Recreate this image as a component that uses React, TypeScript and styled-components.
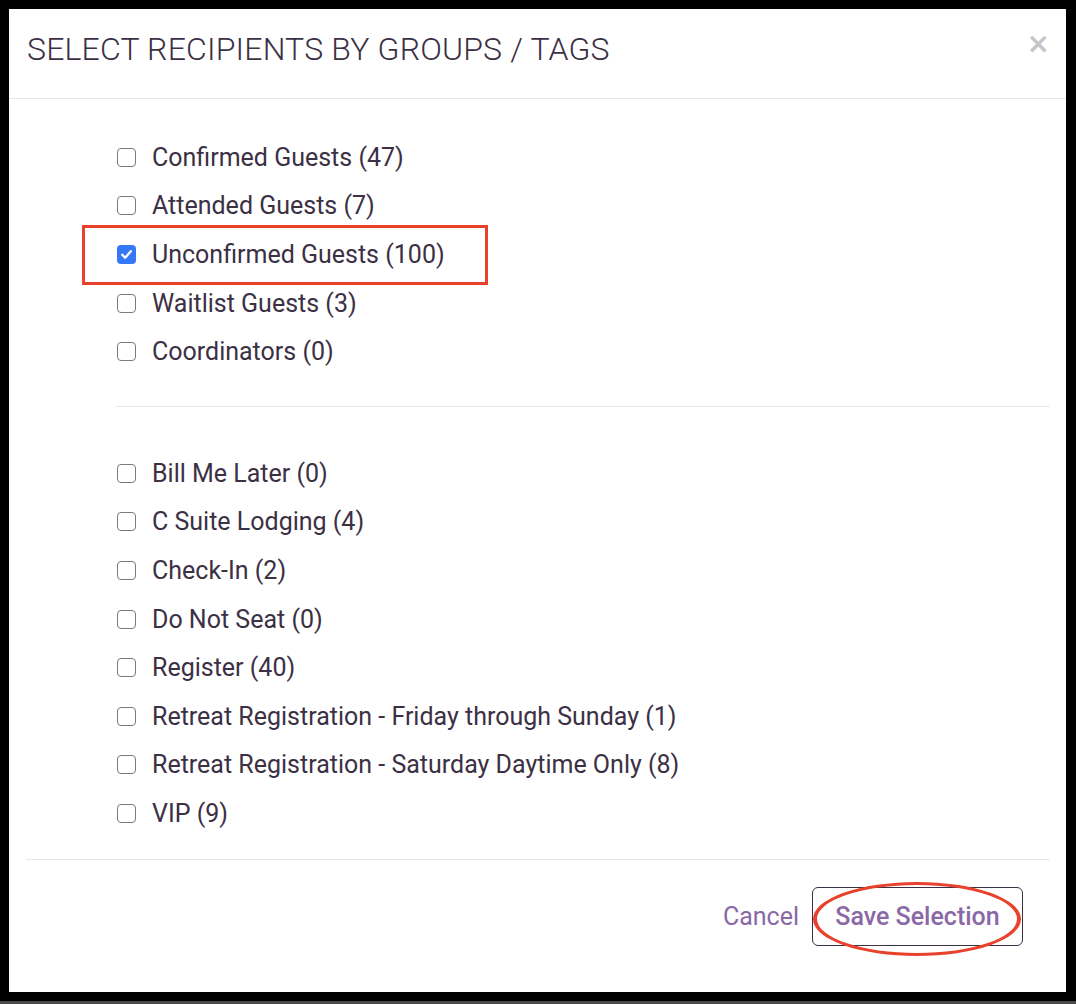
import React from "react";
import styled, { createGlobalStyle } from "styled-components";

const Global = createGlobalStyle`
  html, body { margin: 0; padding: 0; background: #000; }
  body { font-family: Roboto, "Liberation Sans", sans-serif; }
`;

const Frame = styled.div`
  width: 1076px;
  height: 1004px;
  display: flex;
  flex-direction: column;
  box-sizing: border-box;
  background: #000;
`;

const Modal = styled.div`
  margin: 9px 10px 0 9px;
  height: 983px;
  background: #fff;
  display: flex;
  flex-direction: column;
  position: relative;
`;

const Spacer = styled.div`
  flex: 1;
`;

const BottomStrip = styled.div`
  height: 3px;
  background: #4a4a4a;
`;

const Header = styled.div`
  height: 90px;
  box-sizing: border-box;
  border-bottom: 1px solid #e6e6e6;
  display: flex;
  align-items: center;
  justify-content: space-between;
  padding: 0 16px 0 18px;
`;

const Title = styled.h1`
  margin: 0;
  font-family: Roboto, "Liberation Sans", sans-serif;
  font-weight: 300;
  font-size: 32px;
  color: #3b3044;
  letter-spacing: 0.18px;
  margin-top: -10px;
`;

const Close = styled.button`
  border: none;
  background: none;
  padding: 0;
  color: #c6c6c6;
  font-size: 28px;
  font-weight: 700;
  line-height: 1;
  align-self: flex-start;
  margin-top: 21px;
  cursor: pointer;
  font-family: "DejaVu Sans", sans-serif;
`;

const Body = styled.div`
  padding: 34px 16px 0 107px;
`;

const Group = styled.div`
  display: flex;
  flex-direction: column;
`;

const GroupDivider = styled.div`
  height: 1px;
  background: #e8e8e8;
  margin: 30px 0 42px 0;
`;

const Row = styled.label<{ $highlight?: boolean }>`
  height: 48.6px;
  display: flex;
  align-items: center;
  gap: 16px;
  padding-left: 1px;
  position: relative;
  color: #3b3044;
  font-size: 25px;
  ${(p) =>
    p.$highlight &&
    `
    &::after {
      content: "";
      position: absolute;
      left: -34px;
      top: -5px;
      width: 406px;
      height: 60px;
      box-sizing: border-box;
      border: 3px solid #e8412c;
    }
  `}
`;

const Box = styled.span<{ $checked?: boolean }>`
  width: 19px;
  height: 19px;
  box-sizing: border-box;
  border-radius: 4px;
  border: ${(p) => (p.$checked ? "none" : "1.5px solid #7a7a7a")};
  background: ${(p) => (p.$checked ? "#3478f6" : "#fff")};
  display: flex;
  align-items: center;
  justify-content: center;
  flex-shrink: 0;
`;

const Label = styled.span`
  font-family: Roboto, "Liberation Sans", sans-serif;
  white-space: nowrap;
`;

const FooterDivider = styled.div`
  height: 1px;
  background: #e6e6e6;
  margin: 21px 16px 0 17px;
`;

const Footer = styled.div`
  display: flex;
  justify-content: flex-end;
  align-items: center;
  gap: 13px;
  padding: 27px 43px 0 0;
`;

const CancelLink = styled.button`
  border: none;
  background: none;
  padding: 0;
  font-family: Roboto, "Liberation Sans", sans-serif;
  font-size: 25px;
  color: #8a68a6;
  cursor: pointer;
`;

const SaveButton = styled.button`
  position: relative;
  width: 211px;
  height: 59px;
  border: 1px solid #3b3044;
  border-radius: 6px;
  background: #fff;
  font-family: Roboto, "Liberation Sans", sans-serif;
  font-size: 25px;
  font-weight: 500;
  color: #8a68a6;
  cursor: pointer;
  &::after {
    content: "";
    position: absolute;
    left: 0px;
    top: -6px;
    width: 208px;
    height: 74px;
    box-sizing: border-box;
    border: 3px solid #e8412c;
    border-left-width: 4px;
    border-right-width: 4px;
    border-radius: 50%;
  }
`;

const Check = () => (
  <svg width="13" height="13" viewBox="0 0 13 13">
    <path d="M2.2 6.8 L5.2 9.8 L10.8 3.2" fill="none" stroke="#fff" strokeWidth="2.3" strokeLinecap="round" strokeLinejoin="round" />
  </svg>
);

const groups = [
  { label: "Confirmed Guests (47)" },
  { label: "Attended Guests (7)" },
  { label: "Unconfirmed Guests (100)", checked: true },
  { label: "Waitlist Guests (3)" },
  { label: "Coordinators (0)" },
];

const tags = [
  "Bill Me Later (0)",
  "C Suite Lodging (4)",
  "Check-In (2)",
  "Do Not Seat (0)",
  "Register (40)",
  "Retreat Registration - Friday through Sunday (1)",
  "Retreat Registration - Saturday Daytime Only (8)",
  "VIP (9)",
];

export default function App() {
  return (
    <Frame>
      <Global />
      <Modal>
        <Header>
          <Title>SELECT RECIPIENTS BY GROUPS / TAGS</Title>
          <Close aria-label="Close">×</Close>
        </Header>
        <Body>
          <Group>
            {groups.map((g) => (
              <Row key={g.label} $highlight={g.checked}>
                <Box $checked={g.checked}>{g.checked && <Check />}</Box>
                <Label>{g.label}</Label>
              </Row>
            ))}
          </Group>
          <GroupDivider />
          <Group>
            {tags.map((t) => (
              <Row key={t}>
                <Box />
                <Label>{t}</Label>
              </Row>
            ))}
          </Group>
        </Body>
        <FooterDivider />
        <Footer>
          <CancelLink>Cancel</CancelLink>
          <SaveButton>Save Selection</SaveButton>
        </Footer>
      </Modal>
      <Spacer />
      <BottomStrip />
    </Frame>
  );
}
